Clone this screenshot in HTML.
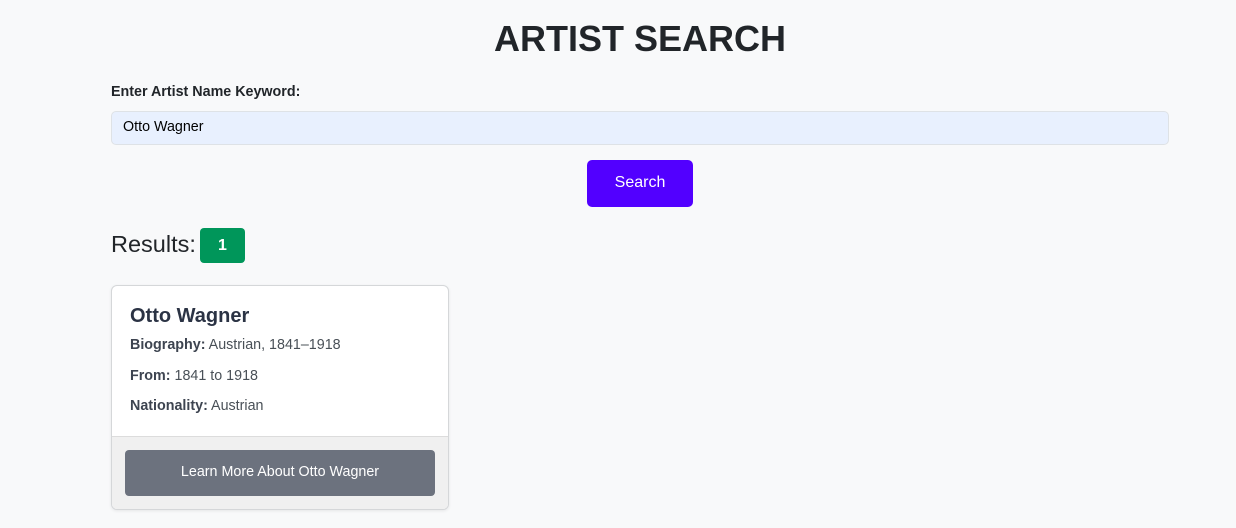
<!DOCTYPE html>
<html><head><style>
body{margin:0;background:#f8f9fa;font-family:"Liberation Sans",sans-serif;width:1236px;height:528px;overflow:hidden;position:relative;color:#212529}
h1{position:absolute;top:18px;left:0;width:1280px;margin:0;text-align:center;font-size:36px;font-weight:bold;color:#212529}
.lbl{position:absolute;left:111px;top:84px;font-size:14.3px;font-weight:bold}
.inp{position:absolute;left:111px;top:111px;height:32px;background:#e8f0fe;border:1px solid #dee2e6;border-radius:5px;box-sizing:content-box;font-size:14.3px;line-height:31px;padding-left:11px;width:1045px;color:#000}
.btn{position:absolute;left:587px;top:160px;width:106px;height:47px;background:#5200ff;color:#fff;border-radius:5px;font-size:16px;text-align:center;line-height:45px}
.res{position:absolute;left:111px;top:230px;font-size:23.5px;line-height:28px}
.badge{position:absolute;left:200px;top:228px;width:45px;height:35px;background:#00965a;color:#fff;border-radius:4px;text-align:center;line-height:35px;font-weight:bold;font-size:16px}
.card{position:absolute;left:111px;top:285px;width:336px;height:223px;background:#fff;border:1px solid #d5d7d9;border-radius:6px;overflow:hidden;box-shadow:0 1px 3px rgba(0,0,0,.08)}
.card h2{position:absolute;left:18px;top:19px;margin:0;font-size:20px;color:#2b3344}
.p{position:absolute;left:18px;font-size:14.3px;color:#495057}
.p b{color:#3d4450}
.foot{position:absolute;left:0;top:150px;width:336px;height:73px;background:#f0f0f0;border-top:1px solid #dcdcdc}
.lm{position:absolute;left:13px;top:13px;width:310px;height:46px;background:#6c727e;border-radius:4px;color:#fff;text-align:center;line-height:44px;font-size:14.3px}
</style></head><body>
<h1>ARTIST SEARCH</h1>
<div class="lbl">Enter Artist Name Keyword:</div>
<div class="inp">Otto Wagner</div>
<div class="btn">Search</div>
<div class="res">Results:</div>
<div class="badge">1</div>
<div class="card">
<h2>Otto Wagner</h2>
<div class="p" style="top:51px"><b>Biography:</b> Austrian, 1841–1918</div>
<div class="p" style="top:82px"><b>From:</b> 1841 to 1918</div>
<div class="p" style="top:112px"><b>Nationality:</b> Austrian</div>
<div class="foot"><div class="lm">Learn More About Otto Wagner</div></div>
</div>
</body></html>
